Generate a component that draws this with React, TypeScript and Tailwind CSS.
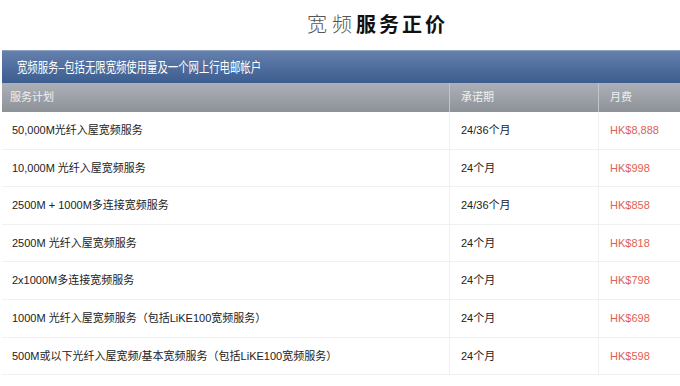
const plans = [
  { name: "50,000M光纤入屋宽频服务", term: "24/36个月", fee: "HK$8,888" },
  { name: "10,000M 光纤入屋宽频服务", term: "24个月", fee: "HK$998" },
  { name: "2500M + 1000M多连接宽频服务", term: "24/36个月", fee: "HK$858" },
  { name: "2500M 光纤入屋宽频服务", term: "24个月", fee: "HK$818" },
  { name: "2x1000M多连接宽频服务", term: "24个月", fee: "HK$798" },
  { name: "1000M 光纤入屋宽频服务（包括LiKE100宽频服务）", term: "24个月", fee: "HK$698" },
  { name: "500M或以下光纤入屋宽频/基本宽频服务（包括LiKE100宽频服务）", term: "24个月", fee: "HK$598" },
];

const font = "font-['Liberation_Sans','Noto_Sans_CJK_SC',sans-serif]";

export default function App() {
  return (
    <div className={`w-[680px] h-[386px] bg-white overflow-hidden ${font}`}>
      <div className="h-[50px] flex items-center pl-[307px] text-[20px]">
        <span className="text-[#555] font-light">宽</span>
        <span className="text-[#555] font-light ml-[5px]">频</span>
        <span className="text-[#111] font-bold ml-[4px] tracking-[3px]">服务正价</span>
      </div>

      <div className="ml-[2px]">
        <div className="h-[33px] flex items-center pl-[15px] bg-gradient-to-b from-[#6480ad] to-[#3c5d8f] border-t border-[#8ea2c4] text-white text-[14px] overflow-hidden">
          <span className="inline-block whitespace-nowrap origin-left scale-x-[0.74]">
            宽频服务–包括无限宽频使用量及一个网上行电邮帐户
          </span>
        </div>

        <div className="grid grid-cols-[447px_149px_1fr] h-[29px] bg-gradient-to-b from-[#adb1b7] to-[#8d9298] text-[#eef0f2] text-[11px]">
          <div className="flex items-center pl-[8px]">服务计划</div>
          <div className="flex items-center pl-[11px] border-l border-[#c2c5ca]">承诺期</div>
          <div className="flex items-center pl-[11px] border-l border-[#c2c5ca]">月费</div>
        </div>

        {plans.map((p) => (
          <div
            key={p.name}
            className="grid grid-cols-[447px_149px_1fr] h-[37.6px] border-b border-[#f0f0f0] text-[11px] text-[#222]"
          >
            <div className="flex items-center pl-[10px]">{p.name}</div>
            <div className="flex items-center pl-[11px] border-l border-[#f0f0f0]">{p.term}</div>
            <div className="flex items-center pl-[11px] border-l border-[#f0f0f0] text-[#df5f52]">{p.fee}</div>
          </div>
        ))}
      </div>
    </div>
  );
}
